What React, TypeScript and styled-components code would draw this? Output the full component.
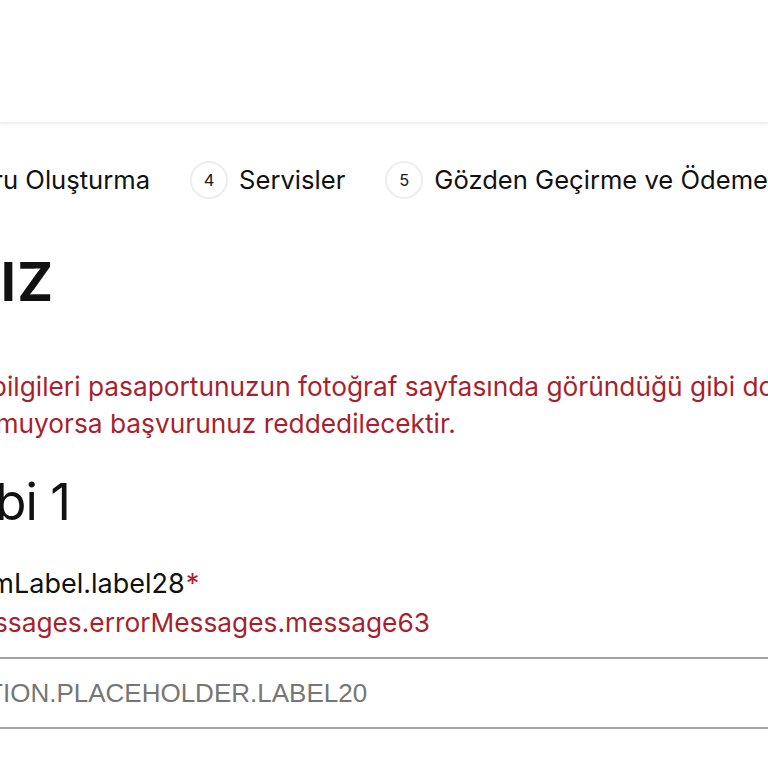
import React from "react";
import styled, { createGlobalStyle } from "styled-components";

const Global = createGlobalStyle`
  html, body {
    margin: 0;
    padding: 0;
    background: #ffffff;
    overflow: hidden;
  }
  body {
    font-family: Inter, "Noto Sans", sans-serif;
    color: #111111;
  }
`;

const red = "#a91f2d";

const Header = styled.header`
  height: 122px;
  background: #ffffff;
  border-bottom: 2px solid #f1f1f1;
  box-shadow: 0 2px 3px rgba(0, 0, 0, 0.03);
`;

const Viewport = styled.main`
  width: 768px;
  overflow: hidden;
`;

// the page column sits further left than the crop shows
const Column = styled.div`
  width: 1500px;
  margin-left: -308px;
  display: flex;
  flex-direction: column;
  align-items: flex-start;
`;

const Stepper = styled.ol<{ $pull: number }>`
  list-style: none;
  margin: 37px 0 0 ${(p) => -p.$pull}px;
  padding: 0;
  display: flex;
  gap: 40px;
  white-space: nowrap;
`;

const Step = styled.li`
  display: flex;
  align-items: center;
  gap: 11px;
`;

const StepNumber = styled.span`
  width: 38px;
  height: 38px;
  box-sizing: border-box;
  border: 2px solid #eeeeee;
  border-radius: 50%;
  display: flex;
  align-items: center;
  justify-content: center;
  font-size: 16.5px;
  color: #1a1a1a;
`;

const StepLabel = styled.span`
  font-size: 25.6px;
  line-height: 38px;
  color: #111111;
`;

const Title = styled.h1<{ $pull: number }>`
  margin: 50px 0 0 ${(p) => -p.$pull}px;
  font-size: 54px;
  line-height: 66px;
  font-weight: 700;
  letter-spacing: 1.5px;
  text-transform: uppercase;
  white-space: nowrap;
`;

const Warning = styled.p<{ $pull: number }>`
  margin: 53px 0 0 ${(p) => -p.$pull}px;
  font-size: 26.3px;
  line-height: 37px;
  color: ${red};
  white-space: nowrap;
`;

const SubTitle = styled.h2<{ $pull: number }>`
  margin: 30px 0 0 ${(p) => -p.$pull}px;
  font-size: 51px;
  line-height: 60px;
  font-weight: 400;
  letter-spacing: -1px;
  white-space: nowrap;
`;

const Field = styled.div`
  margin-top: 36px;
  width: 100%;
  display: flex;
  flex-direction: column;
  align-items: flex-start;
`;

const Label = styled.label<{ $pull: number }>`
  margin-left: ${(p) => -p.$pull}px;
  font-size: 27px;
  line-height: 32px;
  white-space: nowrap;
`;

const Required = styled.span`
  color: ${red};
  margin-left: 1px;
`;

const ErrorText = styled.div<{ $pull: number }>`
  margin: 7px 0 0 ${(p) => -p.$pull}px;
  font-size: 26.3px;
  line-height: 32px;
  color: ${red};
  white-space: nowrap;
`;

const Input = styled.input`
  margin-top: 18px;
  width: 100%;
  height: 72px;
  box-sizing: border-box;
  border: 2px solid #a3a3a3;
  border-radius: 0;
  padding: 0 0 0 8px;
  font-family: "Liberation Sans", Arial, sans-serif;
  font-size: 26px;
  color: #111111;
  background: #ffffff;
  outline: none;

  &::placeholder {
    color: #767676;
  }
`;

const steps = [
  "Seyahat Bilgileri",
  "Başvuru Sahipleri",
  "Başvuru Oluşturma",
  "Servisler",
  "Gözden Geçirme ve Ödeme",
];

export default function App() {
  return (
    <>
      <Global />
      <Header />
      <Viewport>
        <Column>
          <Stepper $pull={404}>
            {steps.map((s, i) => (
              <Step key={s}>
                <StepNumber>{i + 1}</StepNumber>
                <StepLabel>{s}</StepLabel>
              </Step>
            ))}
          </Stepper>
          <Title $pull={-3} lang="en">Bilgileriniz</Title>
          <Warning $pull={30}>
            Lütfen tüm başvuru sahibi bilgileri pasaportunuzun fotoğraf sayfasında göründüğü gibi doldurunuz.
            <br />
            Pasaport bilgilerinizle uyuşmuyorsa başvurunuz reddedilecektir.
          </Warning>
          <SubTitle $pull={0}>Başvuru Sahibi 1</SubTitle>
          <Field>
            <Label $pull={5}>
              visaApplicationForm.formLabel.label28<Required>*</Required>
            </Label>
            <ErrorText $pull={-10}>visaApplicationFormMessages.errorMessages.message63</ErrorText>
            <Input placeholder="PASSENGER.INFORMATION.PLACEHOLDER.LABEL20" />
          </Field>
        </Column>
      </Viewport>
    </>
  );
}
